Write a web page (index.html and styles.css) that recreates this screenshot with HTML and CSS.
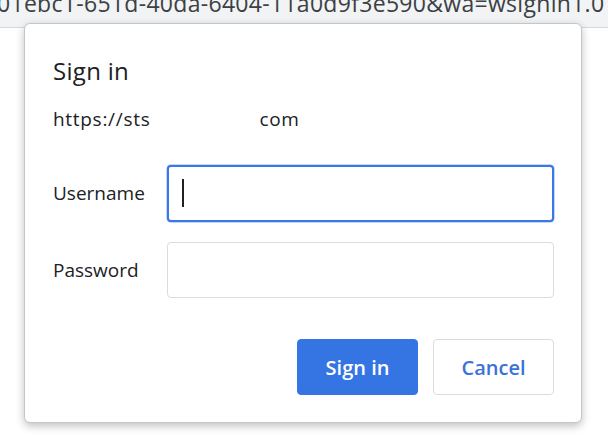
FILE: index.html
```html
<!DOCTYPE html>
<html lang="en">
<head>
<meta charset="utf-8">
<title>Sign in</title>
<link rel="stylesheet" href="styles.css">
</head>
<body>
<div class="omnibox">
  <div class="url">01ebc1-651d-40da-6404-11a0d9f3e590&amp;wa=wsignin1.0</div>
</div>
<div class="page"></div>

<div class="dialog" role="dialog" aria-label="Sign in">
  <h1 class="title">Sign in</h1>
  <div class="origin">https://sts<span class="redacted"></span>com</div>
  <div class="form">
    <label class="label">Username</label>
    <div class="field focused"><span class="caret"></span></div>
    <label class="label">Password</label>
    <div class="field"></div>
  </div>
  <div class="actions">
    <button class="btn primary">Sign in</button>
    <button class="btn secondary">Cancel</button>
  </div>
</div>
</body>
</html>
```

FILE: styles.css
```css
* { box-sizing: border-box; }

html, body {
  margin: 0;
  padding: 0;
  width: 608px;
  height: 438px;
  overflow: hidden;
  background: #ffffff;
  font-family: "Open Sans", "Noto Sans", "Liberation Sans", sans-serif;
  color: #202124;
}

body {
  display: flex;
  flex-direction: column;
  position: relative;
}

.omnibox {
  height: 28px;
  background: #f1f3f4;
  border-bottom: 1px solid #d6d8db;
  overflow: hidden;
  flex: none;
}

.url {
  margin-top: -8.5px;
  margin-left: -3px;
  font-size: 23px;
  line-height: 23px;
  color: #3c4043;
  white-space: nowrap;
  letter-spacing: 0.3px;
}

.page {
  flex: 1;
  background: #ffffff;
}

.dialog {
  position: absolute;
  left: 24px;
  top: 23px;
  width: 558px;
  height: 400px;
  background: #ffffff;
  border: 1px solid #c4c6c8;
  border-radius: 6px;
  box-shadow: 0 3px 9px rgba(0, 0, 0, 0.25);
  padding: 32px 27px 0 28px;
  display: flex;
  flex-direction: column;
}

.title {
  margin: 0;
  font-size: 24px;
  font-weight: 400;
  line-height: 30px;
  letter-spacing: 0.3px;
  color: #202124;
}

.origin {
  margin-top: 21px;
  font-size: 19px;
  line-height: 24px;
  letter-spacing: 0.7px;
  color: #202124;
  white-space: nowrap;
}

.redacted {
  display: inline-block;
  width: 109px;
}

.form {
  margin-top: 34px;
  display: grid;
  grid-template-columns: 114px 1fr;
  grid-auto-rows: 56px;
  row-gap: 21px;
  align-items: center;
}

.label {
  font-size: 19px;
  color: #202124;
}

.field {
  height: 56px;
  border: 1px solid #dadce0;
  border-radius: 4px;
  background: #fff;
  display: flex;
  align-items: center;
  padding-left: 13px;
}

.field.focused {
  height: 57px;
  border: 2px solid #3b78e7;
  box-shadow: 0 0 0 0.5px rgba(59, 120, 231, 0.6);
}

.caret {
  width: 1.5px;
  height: 28px;
  background: #202124;
}

.actions {
  margin-top: 41px;
  display: flex;
  justify-content: flex-end;
  gap: 15px;
}

.btn {
  width: 121px;
  height: 56px;
  border-radius: 4px;
  font-family: inherit;
  font-size: 20px;
  font-weight: 600;
  cursor: pointer;
}

.btn.primary {
  background: #3574e3;
  border: 1px solid #3574e3;
  color: #ffffff;
}

.btn.secondary {
  background: #ffffff;
  border: 1px solid #dadce0;
  color: #3a72d8;
}
```
